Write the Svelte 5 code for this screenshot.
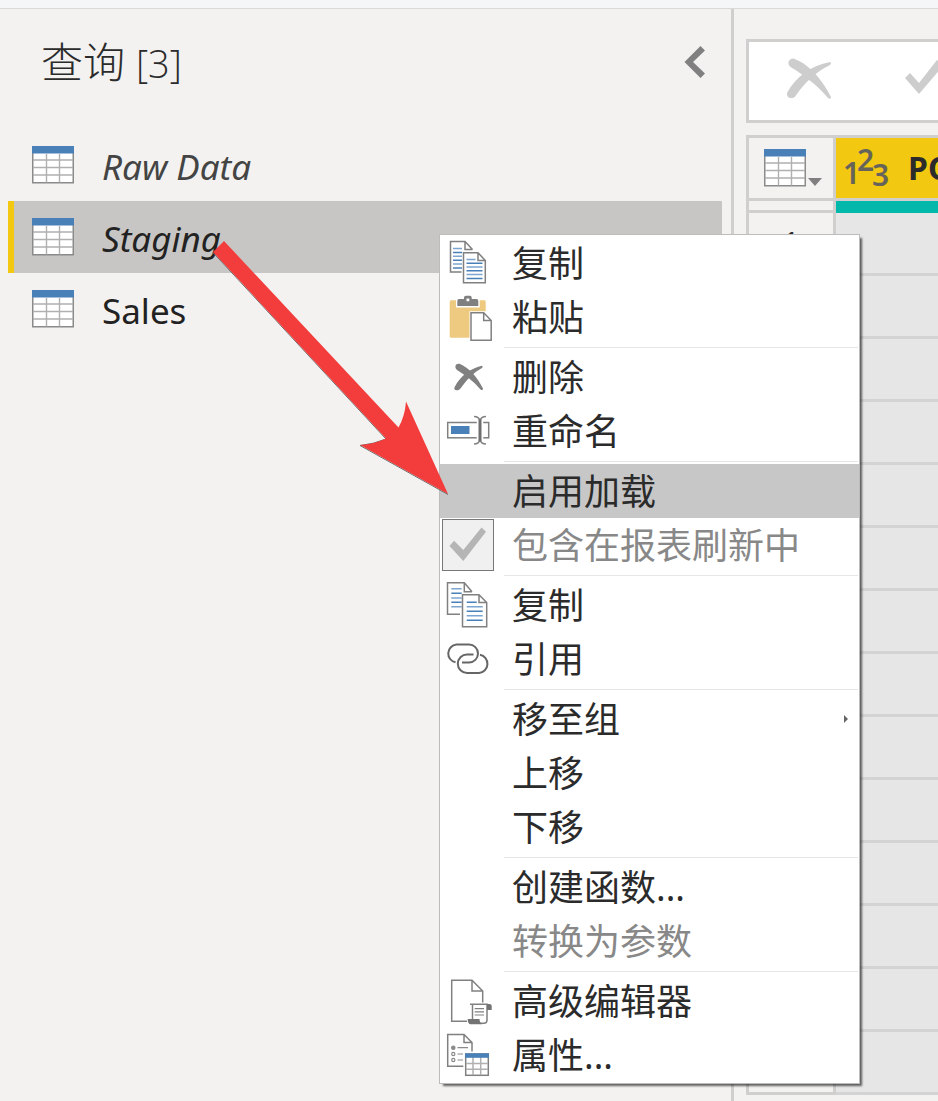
<script>
  const queries = [
    { name: 'Raw Data', italic: true, faded: true },
    { name: 'Staging', italic: true, selected: true },
    { name: 'Sales' }
  ];

  const groups = [
    [
      { label: '复制', icon: 'copy' },
      { label: '粘贴', icon: 'paste' }
    ],
    [
      { label: '删除', icon: 'delete' },
      { label: '重命名', icon: 'rename' }
    ],
    [
      { label: '启用加载', active: true },
      { label: '包含在报表刷新中', icon: 'check', disabled: true }
    ],
    [
      { label: '复制', icon: 'duplicate' },
      { label: '引用', icon: 'link' }
    ],
    [{ label: '移至组', submenu: true }, { label: '上移' }, { label: '下移' }],
    [{ label: '创建函数...' }, { label: '转换为参数', disabled: true }],
    [
      { label: '高级编辑器', icon: 'editor' },
      { label: '属性...', icon: 'properties' }
    ]
  ];

  const rows = Array.from({ length: 14 }, (_, i) => i + 1);
</script>

{#snippet tableIcon()}
  <svg class="table-icon" width="42" height="38" viewBox="0 0 42 38" aria-hidden="true">
    <rect x="0.75" y="0.75" width="40.5" height="36" fill="#fff" stroke="#8a8a8a" stroke-width="1.5" />
    <path d="M14.5 8V36.5M27.5 8V36.5M1 14H41M1 21.5H41M1 29H41" stroke="#b0b0b0" stroke-width="1.4" />
    <rect width="42" height="7.500" fill="#4a80b8" />
  </svg>
{/snippet}

{#snippet menuIcon(name)}
  <svg width="56" height="54" viewBox="0 0 56 54" fill="none" stroke="#808080" stroke-width="1.5" aria-hidden="true">
    {#if name === 'copy'}
      <path d="M21.5 36H10.5V5.5H25L32.5 13.5M25 5.5V13.5H32.5" />
      <path d="M13 12.5H22M13 20.3H22M13 28H22" stroke="#7ea5cf" />
      <path d="M13 16.4H22M13 24.2H22M13 32H22" stroke="#4a80b8" />
      <path d="M23.5 16.7H38L45.3 24.5V46.7H23.5ZM38 16.7V24.5H45.3" fill="#fff" />
      <path d="M26.5 23.5H35.5M26.5 31H42.5M26.5 38.5H42.5" stroke="#7ea5cf" />
      <path d="M26.5 27.3H42.5M26.5 34.8H42.5M26.5 42.4H42.5" stroke="#4a80b8" />
    {:else if name === 'paste'}
      <rect x="9.7" y="10.3" width="36" height="37.4" rx="1.5" fill="#eec980" stroke="none" />
      <path d="M16 7H23V4H33V7H39.7V17.5H16Z" fill="#fff" stroke="none" />
      <path fill-rule="evenodd" d="M19 9H24V7.5Q24 5.7 26 5.7H30Q31.7 5.7 31.7 7.5V9H36.5Q38.3 9 38.3 11V16H17.3V11Q17.3 9 19 9ZM26.5 8.5H29.3V11.3H26.5Z" fill="#808080" stroke="none" />
      <path d="M29.5 21.2H46L53 29V52H29.5Z" fill="#fff" stroke="none" />
      <path d="M31 22.7H43.7L51.2 30.5V50.2H31ZM43.7 22.7V30.5H51.2" fill="#fff" />
    {:else if name === 'delete'}
      <path d="M17 20C14 17 15.500 13 19.500 13.800C29 17.500 37.500 27.500 43 38.500Q43 41 40.500 39.500C33.500 31 25 25 17 20Z" fill="#808080" stroke="none" />
      <path d="M15 36.500C20 26.500 30 18.500 42 15.800Q43.500 16.800 42 18C33 23 26.500 30 20.500 38.500C17.500 42 12.500 40 15 36.500Z" fill="#808080" stroke="none" />
    {:else if name === 'rename'}
      <rect x="7.7" y="18.5" width="41" height="15.3" />
      <rect x="11" y="22" width="18.5" height="8" fill="#4a80b8" stroke="none" />
      <path d="M40 12V41" stroke="#fff" stroke-width="6.5" />
      <path d="M34 12.5Q39 12.5 40 17Q41 12.5 46 12.5M34 40Q39 40 40 35.5Q41 40 46 40" />
      <path d="M40 15.5V37" stroke="#6e6e6e" stroke-width="3" />
    {:else if name === 'check'}
      <rect x="2.5" y="1.5" width="51" height="51" fill="#f0f0f0" stroke="#777" stroke-width="1" />
      <path d="M9.500 28L14 22.700L23.300 32L41.500 9.500L46 13.700L23.300 43Z" fill="#b5b5b5" stroke="none" />
    {:else if name === 'duplicate'}
      <path d="M20 36.3H7.5V4.7H24.3L32 13.7M24.3 4.7V13.7H32" />
      <path d="M11.3 10.7H21.7M11.3 20H21.7M11.3 28.7H21.7" stroke="#7ea5cf" />
      <path d="M11.3 15.3H21.7M11.3 24.3H21.7" stroke="#4a80b8" />
      <path d="M22.5 16.7H39L46.7 24.5V48.7H22.5ZM39 16.7V24.5H46.7" fill="#fff" />
      <path d="M26.7 24.3H36.7M26.7 33.3H42.7M26.7 42.3H42.7" stroke="#4a80b8" />
      <path d="M26.7 28.7H42.7M26.7 37.8H42.7" stroke="#7ea5cf" />
    {:else if name === 'link'}
      <path d="M15.5 30.3A9 9 0 0 1 16.5 12.5H29A9 9 0 0 1 29 30.5H22" stroke="#666" stroke-width="2" />
      <path d="M40 22.8A9.2 9.2 0 0 1 39 41H27A9.2 9.2 0 0 1 27 22.6H33.5" stroke="#666" stroke-width="2" />
    {:else if name === 'editor'}
      <path d="M27 47.3H11.7V6.3H32L42.7 17V28.5M32 6.3V17H42.7" />
      <path d="M30 30.3H47V46Q47 49.3 44 49.3H38" />
      <path d="M32.5 31V45" />
      <path d="M47 30H49.5Q51.7 30 51.7 32V36H47Z" fill="#737373" stroke="none" />
      <path d="M27.7 45H39.5Q39.5 49 42.5 50.2H30Q27.7 49.5 27.7 45Z" fill="#737373" stroke="none" />
      <path d="M34.7 34.7H44M34.7 37.8H44M34.7 41H44" stroke-width="1.2" />
    {:else if name === 'properties'}
      <path d="M23.3 38.3H7.7V6.5H24L32 14.5V23.5M24 6.5V14.5H32" />
      <g stroke="#8a8a8a" stroke-width="1.2">
        <circle cx="13.3" cy="19.7" r="1.7" fill="#8a8a8a" />
        <circle cx="13.3" cy="26" r="1.6" />
        <circle cx="13.3" cy="32" r="1.6" />
        <path d="M17.5 19.7H28M17.5 26H23M17.5 32H23" />
      </g>
      <rect x="25.7" y="26" width="22.6" height="21.3" fill="#fff" />
      <path d="M33 29V47M40.7 29V47M26 35.5H48M26 41.3H48" stroke="#b0b0b0" />
      <rect x="25" y="25.3" width="24" height="4.5" fill="#4a80b8" stroke="none" />
    {/if}
  </svg>
{/snippet}

<div class="app">
  <div class="ribbon-edge"></div>
  <div class="workspace">
    <aside class="pane">
      <header class="pane-head">
        <h1>查询 <span>[3]</span></h1>
        <button class="collapse" aria-label="折叠">
          <svg width="22" height="34" viewBox="0 0 22 34" aria-hidden="true">
            <path d="M0.5 17L16.5 1L21 5.5L9 17L21 28.5L16.5 33Z" fill="#808080" />
          </svg>
        </button>
      </header>
      <ul class="queries">
        {#each queries as q}
          <li>
            <button class="query" class:selected={q.selected} class:italic={q.italic} class:faded={q.faded}>
              {@render tableIcon()}
              <span>{q.name}</span>
            </button>
          </li>
        {/each}
      </ul>
    </aside>

    <main class="content">
      <div class="formula">
        <button aria-label="取消">
          <svg width="46" height="42" viewBox="0 0 46 42" fill="#cdcdcd" aria-hidden="true">
            <path d="M3.500 9C0 6 1 0.500 6.500 0.500C20 5 34 19 44 39Q44 42 41 40C30 27 17 17 3.500 9Z" />
            <path d="M0.500 34C9 19 24 7.500 43 4Q45 5 43 7C29 14 18 24 8.500 38C6 42 -2 40 0.500 34Z" />
          </svg>
        </button>
        <button aria-label="确认">
          <svg width="46" height="42" viewBox="0 0 46 42" fill="#cdcdcd" aria-hidden="true">
            <path d="M0 20L5 15L14 25L32 2L38 8L14 36Z" />
          </svg>
        </button>
      </div>

      <table>
        <colgroup>
          <col class="index-col" />
          <col />
        </colgroup>
        <thead>
          <tr class="head">
            <th>
              <button class="table-menu" aria-label="表">
                {@render tableIcon()}
                <svg width="14" height="8" viewBox="0 0 14 8" aria-hidden="true"><path d="M0 0H14L7 8Z" fill="#808080" /></svg>
              </button>
            </th>
            <th class="column">
              <div class="column-title">
                <svg width="46" height="46" viewBox="0 0 46 46" aria-hidden="true">
                  <text x="-1" y="39">1</text>
                  <text x="13" y="26">2</text>
                  <text x="28" y="41">3</text>
                </svg>
                <span>PO</span>
              </div>
            </th>
          </tr>
          <tr class="quality">
            <td></td>
            <td class="valid"></td>
          </tr>
        </thead>
        <tbody>
          {#each rows as n}
            <tr>
              <th scope="row">{n}</th>
              <td></td>
            </tr>
          {/each}
        </tbody>
      </table>
    </main>
  </div>

  <div class="menu" role="menu">
    {#each groups as group, g}
      {#if g > 0}<hr />{/if}
      {#each group as item}
        <button class="item" class:active={item.active} role="menuitem" disabled={item.disabled}>
          {@render menuIcon(item.icon)}
          <span>{item.label}</span>
          {#if item.submenu}
            <svg class="more" width="4" height="8" viewBox="0 0 4 8" aria-hidden="true"><path d="M0 0L4 4L0 8Z" fill="#666" /></svg>
          {/if}
        </button>
      {/each}
    {/each}
  </div>

  <svg class="arrow" width="240" height="256" viewBox="0 0 240 256" aria-hidden="true">
    <path d="M4 12.500L177 199Q165 204 151 205.500L239 254.500" fill="none" stroke="#6b7070" stroke-width="1" />
    <path d="M15 1L189.500 187.500Q196 176 197 161.500L239 254L151 205Q165 204 177 198.500L4 12Z" fill="#f33d3c" />
  </svg>
</div>

<style>
  :global(body) {
    margin: 0;
  }

  .app {
    position: relative;
    height: 100vh;
    display: flex;
    flex-direction: column;
    overflow: hidden;
    background: #f3f2f0;
    color: #2b2b2b;
    font-family: 'Noto Sans', 'Noto Sans CJK SC', sans-serif;
    font-size: 36px;
  }

  button {
    margin: 0;
    padding: 0;
    border: 0;
    background: none;
    color: inherit;
    font: inherit;
    text-align: left;
  }

  svg {
    display: block;
    flex: none;
  }

  .ribbon-edge {
    flex: none;
    height: 8px;
    background: #f4f6f8;
    border-bottom: 1px solid #d9d9d9;
  }

  .workspace {
    flex: 1;
    min-height: 0;
    display: grid;
    grid-template-columns: 3.6fr minmax(0, 1fr);
  }

  .pane {
    border-right: 3px solid #d0cfcd;
  }

  .pane-head {
    display: flex;
    align-items: center;
    justify-content: space-between;
    height: 106px;
    padding: 0 25px 0 41px;
    margin-bottom: 14px;
  }

  h1 {
    margin: 0;
    font-family: 'Open Sans', 'Noto Sans CJK SC', sans-serif;
    font-size: 42px;
    line-height: 48px;
    font-weight: 300;
  }

  h1 span {
    font-size: 38px;
  }

  .queries {
    margin: 0;
    padding: 0 9px 0 8px;
    list-style: none;
  }

  .query {
    display: flex;
    align-items: center;
    gap: 28px;
    width: 100%;
    height: 72px;
    padding-left: 18px;
    border-left: 6px solid transparent;
    font-size: 35px;
    line-height: 48px;
    color: #222;
  }

  .query span {
    padding-top: 4px;
  }

  .italic {
    font-style: italic;
  }

  .faded {
    color: #444;
  }

  .selected {
    background: #c8c6c4;
    border-left-color: #f2c811;
  }

  .content {
    padding: 30px 0 0 12px;
    overflow: hidden;
  }

  .formula {
    display: flex;
    align-items: center;
    gap: 72px;
    box-sizing: border-box;
    height: 84px;
    margin-bottom: 12px;
    padding: 0 0 4px 38px;
    border: 3px solid #d0cfcd;
    border-right: 0;
    background: #fff;
    overflow: hidden;
  }

  table {
    width: 100%;
    table-layout: fixed;
    border-collapse: separate;
    border-spacing: 0;
    border-top: 3px solid #d0cfcd;
    border-left: 3px solid #d0cfcd;
  }

  .index-col {
    width: 87px;
  }

  th,
  td {
    box-sizing: border-box;
    height: 63px;
    padding: 0;
    border-bottom: 3px solid #d0cfcd;
    font-size: 30px;
    font-weight: 400;
    line-height: 48px;
  }

  tr > :first-child {
    border-right: 3px solid #d0cfcd;
  }

  td {
    background: #e6e6e6;
    border-bottom-color: #d3d3d3;
  }

  .column {
    background: #f2c811;
  }

  .column-title {
    display: flex;
    align-items: center;
    gap: 18px;
    padding-left: 8px;
    font-size: 32px;
    font-weight: 700;
  }

  .column-title svg {
    overflow: visible;
  }

  .column-title text {
    fill: #66645a;
    font-size: 30px;
    font-weight: 600;
  }

  .table-menu {
    display: flex;
    align-items: flex-end;
    gap: 2px;
    padding-left: 15px;
  }

  .table-menu svg:last-child {
    margin-bottom: 1px;
  }

  .quality td {
    height: 12px;
    background: #f3f2f0;
    border-bottom-color: #d0cfcd;
  }

  .quality .valid {
    background: #01b8aa;
    border-bottom: 0;
  }

  .menu {
    position: absolute;
    top: 234px;
    left: 439px;
    box-sizing: border-box;
    width: 421px;
    padding: 1px 0;
    border: 1px solid #bcbcbc;
    background: #fff;
    box-shadow: 3px 3px 2px -1px rgba(0, 0, 0, 0.6);
  }

  .item {
    display: flex;
    align-items: center;
    gap: 16px;
    width: 100%;
    height: 54px;
    line-height: 54px;
    white-space: nowrap;
  }

  .item span {
    padding-top: 2px;
  }

  .item.active {
    background: #c7c7c7;
  }

  .item:disabled {
    color: #888;
  }

  .more {
    margin: 0 11px 0 auto;
  }

  hr {
    height: 1px;
    margin: 3px 1px 2px 64px;
    border: 0;
    background: #e6e6e6;
  }

  .arrow {
    position: absolute;
    top: 240px;
    left: 209px;
    pointer-events: none;
  }
</style>
